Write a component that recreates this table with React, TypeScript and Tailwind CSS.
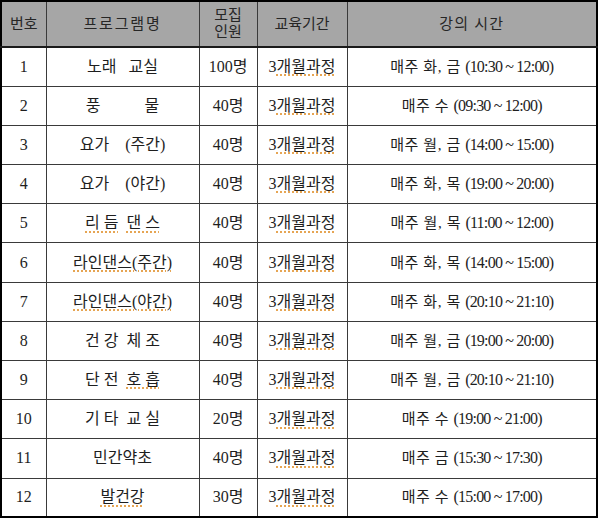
import React from 'react'

type Row = {
  no: string
  name: React.ReactNode
  count: string
  days: string
  time: string
}

const squiggle = 'underline decoration-dotted decoration-[#e0902a] underline-offset-[3px]'

const rows: Row[] = [
  { no: '1', name: '노래   교실', count: '100명', days: '매주 화, 금', time: '(10:30 ~ 12:00)' },
  { no: '2', name: '풍           물', count: '40명', days: '매주 수', time: '(09:30 ~ 12:00)' },
  { no: '3', name: '요가    (주간)', count: '40명', days: '매주 월, 금', time: '(14:00 ~ 15:00)' },
  { no: '4', name: '요가    (야간)', count: '40명', days: '매주 화, 목', time: '(19:00 ~ 20:00)' },
  {
    no: '5',
    name: (
      <>
        <span className={squiggle}>리 듬</span>
        {'  '}
        <span className={squiggle}>댄 스</span>
      </>
    ),
    count: '40명',
    days: '매주 월, 목',
    time: '(11:00 ~ 12:00)',
  },
  { no: '6', name: <span className={squiggle}>라인댄스(주간)</span>, count: '40명', days: '매주 화, 목', time: '(14:00 ~ 15:00)' },
  { no: '7', name: <span className={squiggle}>라인댄스(야간)</span>, count: '40명', days: '매주 화, 목', time: '(20:10 ~ 21:10)' },
  { no: '8', name: '건 강  체 조', count: '40명', days: '매주 월, 금', time: '(19:00 ~ 20:00)' },
  {
    no: '9',
    name: (
      <>
        {'단 전  '}
        <span className={squiggle}>호 흡</span>
      </>
    ),
    count: '40명',
    days: '매주 월, 금',
    time: '(20:10 ~ 21:10)',
  },
  { no: '10', name: '기 타  교 실', count: '20명', days: '매주 수', time: '(19:00 ~ 21:00)' },
  { no: '11', name: '민간약초', count: '40명', days: '매주 금', time: '(15:30 ~ 17:30)' },
  { no: '12', name: <span className={squiggle}>발건강</span>, count: '30명', days: '매주 수', time: '(15:00 ~ 17:00)' },
]

const cell = 'border border-[#3a3a3a] text-center align-middle p-0'

export default function App() {
  return (
    <div className="w-[600px] h-[519px] bg-white font-['Liberation_Serif','Noto_Sans_CJK_KR',serif] text-[#1e1e1e]">
      <table className="w-[598px] table-fixed border-collapse border-2 border-black">
        <colgroup>
          <col className="w-[45px]" />
          <col className="w-[153px]" />
          <col className="w-[58px]" />
          <col className="w-[90px]" />
          <col />
        </colgroup>
        <thead>
          <tr className="h-[46px] bg-[#a6a6a6] text-[15px] text-[#262626]">
            <th className={`${cell} font-normal border-b-2 border-b-[#1a1a1a]`}>번호</th>
            <th className={`${cell} font-normal border-b-2 border-b-[#1a1a1a] tracking-[0.12em]`}>프로그램명</th>
            <th className={`${cell} font-normal border-b-2 border-b-[#1a1a1a] leading-[17px]`}>
              모집
              <br />
              인원
            </th>
            <th className={`${cell} font-normal border-b-2 border-b-[#1a1a1a]`}>교육기간</th>
            <th className={`${cell} font-normal border-b-2 border-b-[#1a1a1a] tracking-[0.08em]`}>강의 시간</th>
          </tr>
        </thead>
        <tbody className="text-[16px]">
          {rows.map((r) => (
            <tr key={r.no} className="h-[39.2px]">
              <td className={cell}>{r.no}</td>
              <td className={`${cell} whitespace-pre`}>{r.name}</td>
              <td className={cell}>{r.count}</td>
              <td className={cell}>
                3<span className={squiggle}>개월과정</span>
              </td>
              <td className={`${cell} whitespace-pre text-[15px] tracking-[0.04em]`}>
                {r.days + ' '}
                <span className="text-[16px] tracking-[-0.05em]">{r.time}</span>
              </td>
            </tr>
          ))}
        </tbody>
      </table>
    </div>
  )
}
